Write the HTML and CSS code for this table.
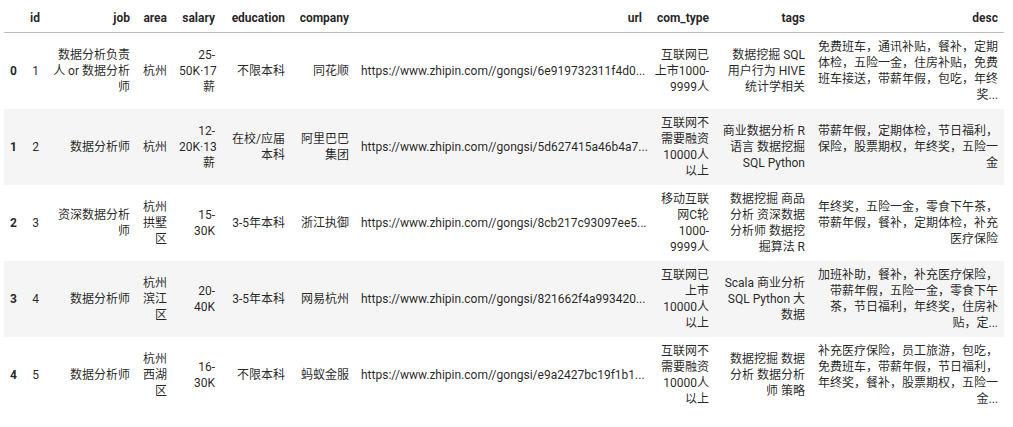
FILE: index.html
```html
<!DOCTYPE html>
<html lang="zh">
<head>
<meta charset="utf-8">
<title>DataFrame</title>
<link rel="stylesheet" href="styles.css">
</head>
<body>
<table class="dataframe">
  <colgroup>
    <col class="c-idx"><col class="c-id"><col class="c-job"><col class="c-area"><col class="c-salary"><col class="c-edu"><col class="c-company"><col class="c-url"><col class="c-type"><col class="c-tags"><col class="c-desc">
  </colgroup>
  <thead>
    <tr>
      <th></th><th>id</th><th>job</th><th>area</th><th>salary</th><th>education</th><th>company</th><th>url</th><th>com_type</th><th>tags</th><th>desc</th>
    </tr>
  </thead>
  <tbody>
    <tr>
      <th class="idx">0</th><td>1</td><td>数据分析负责人 or 数据分析师</td><td>杭州</td><td>25-50K·17薪</td><td>不限本科</td><td>同花顺</td><td class="url">https://www.zhipin.com//gongsi/6e919732311f4d0...</td><td>互联网已上市1000-9999人</td><td>数据挖掘 SQL 用户行为 HIVE 统计学相关</td><td>免费班车，通讯补贴，餐补，定期体检，五险一金，住房补贴，免费班车接送，带薪年假，包吃，年终奖...</td>
    </tr>
    <tr>
      <th class="idx">1</th><td>2</td><td>数据分析师</td><td>杭州</td><td>12-20K·13薪</td><td>在校/应届本科</td><td>阿里巴巴集团</td><td class="url">https://www.zhipin.com//gongsi/5d627415a46b4a7...</td><td>互联网不需要融资10000人以上</td><td>商业数据分析 R语言 数据挖掘 SQL Python</td><td>带薪年假，定期体检，节日福利，保险，股票期权，年终奖，五险一金</td>
    </tr>
    <tr>
      <th class="idx">2</th><td>3</td><td>资深数据分析师</td><td>杭州拱墅区</td><td>15-30K</td><td>3-5年本科</td><td>浙江执御</td><td class="url">https://www.zhipin.com//gongsi/8cb217c93097ee5...</td><td>移动互联网C轮1000-9999人</td><td>数据挖掘 商品分析 资深数据分析师 数据挖掘算法 R</td><td>年终奖，五险一金，零食下午茶，带薪年假，餐补，定期体检，补充医疗保险</td>
    </tr>
    <tr>
      <th class="idx">3</th><td>4</td><td>数据分析师</td><td>杭州滨江区</td><td>20-40K</td><td>3-5年本科</td><td>网易杭州</td><td class="url">https://www.zhipin.com//gongsi/821662f4a993420...</td><td>互联网已上市10000人以上</td><td>Scala 商业分析 SQL Python 大数据</td><td>加班补助，餐补，补充医疗保险，带薪年假，五险一金，零食下午茶，节日福利，年终奖，住房补贴，定...</td>
    </tr>
    <tr>
      <th class="idx">4</th><td>5</td><td>数据分析师</td><td>杭州西湖区</td><td>16-30K</td><td>不限本科</td><td>蚂蚁金服</td><td class="url">https://www.zhipin.com//gongsi/e9a2427bc19f1b1...</td><td>互联网不需要融资10000人以上</td><td>数据挖掘 数据分析 数据分析师 策略</td><td>补充医疗保险，员工旅游，包吃，免费班车，带薪年假，节日福利，年终奖，餐补，股票期权，五险一金...</td>
    </tr>
  </tbody>
</table>
</body>
</html>
```
FILE: styles.css
```css
html, body {
  background: #ffffff;
}

body {
  margin: 0;
  padding: 4px 0 0 4px;
  font-family: Roboto, "Noto Sans CJK SC", sans-serif;
  font-size: 12px;
  color: rgba(0, 0, 0, 0.87);
}

.dataframe {
  table-layout: fixed;
  width: 1000px;
  border-collapse: collapse;
  border-spacing: 0;
  border: none;
}

.c-idx { width: 20px; }
.c-id { width: 21px; }
.c-job { width: 91px; }
.c-area { width: 37px; }
.c-salary { width: 48px; }
.c-edu { width: 70px; }
.c-company { width: 64px; }
.c-url { width: 293px; }
.c-type { width: 67px; }
.c-tags { width: 96px; }
.c-desc { width: 193px; }

.dataframe th,
.dataframe td {
  padding: 6px;
  line-height: 16px;
  text-align: right;
  vertical-align: middle;
  border: none;
}

.dataframe thead th {
  font-weight: bold;
  border-bottom: 1px solid #bdbdbd;
}

.dataframe tbody th.idx {
  font-weight: bold;
  text-align: left;
}

.dataframe tbody tr:nth-child(even) {
  background: #f5f5f5;
}

.dataframe td.url {
  white-space: nowrap;
}
```
